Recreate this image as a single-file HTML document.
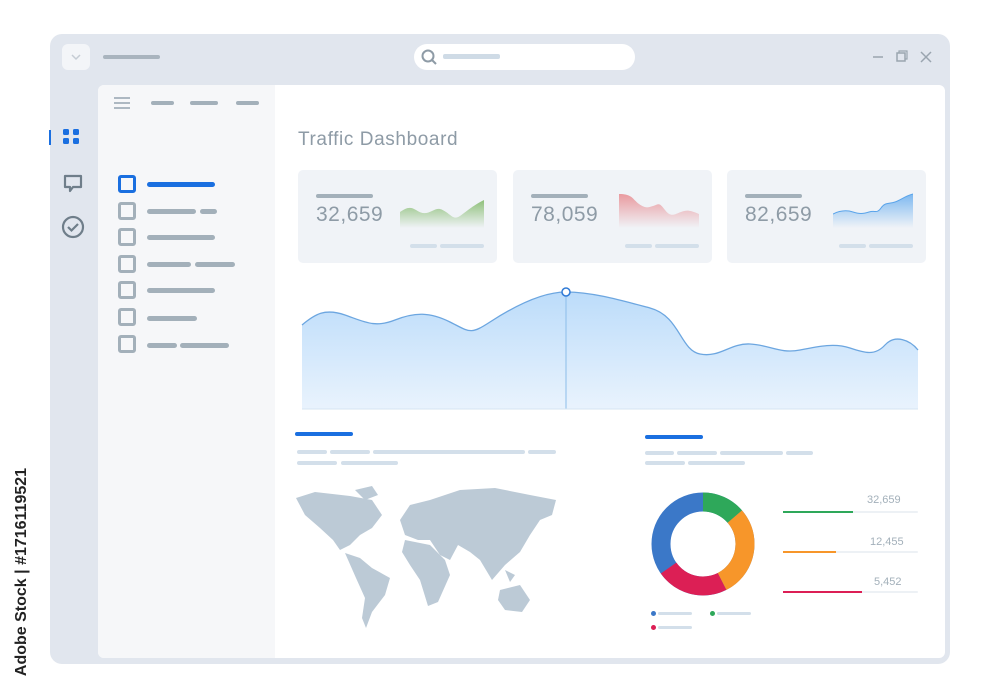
<!DOCTYPE html><html><head><style>
body{margin:0;width:1000px;height:698px;background:#fff;position:relative;overflow:hidden;font-family:"Liberation Sans",sans-serif}
.a{position:absolute}
.bar{position:absolute;height:5px;border-radius:3px;background:#a3b0ba}
.lb{position:absolute;height:4px;border-radius:2px;background:#d3dfea}
.cb{position:absolute;width:12px;height:12px;border:3px solid #a3b0ba;border-radius:3px}
.card{position:absolute;top:170px;width:199px;height:93px;background:#f0f3f7;border-radius:5px}
.num{position:absolute;left:18px;top:33px;font-size:21px;color:#8e9ba6;letter-spacing:.5px}
</style></head><body>
<div class="a" style="left:50px;top:34px;width:900px;height:630px;background:#e1e6ee;border-radius:12px"></div>
<div class="a" style="left:62px;top:44px;width:28px;height:26px;background:#f3f5f8;border-radius:6px"></div>
<svg class="a" style="left:70px;top:52px" width="12" height="10"><path d="M2 3l4 4 4-4" stroke="#c5ccd4" stroke-width="1.5" fill="none"/></svg>
<div class="bar" style="left:103px;top:55px;width:57px;height:4px;background:#a9b4be"></div>
<div class="a" style="left:414px;top:44px;width:221px;height:26px;background:#fff;border-radius:13px"></div>
<svg class="a" style="left:420px;top:48px" width="20" height="20"><circle cx="8" cy="8" r="5.5" stroke="#8e9ba6" stroke-width="2" fill="none"/><path d="M12 12l4 4" stroke="#8e9ba6" stroke-width="2"/></svg>
<div class="lb" style="left:443px;top:54px;width:57px;height:5px;background:#cfdbe6"></div>
<svg class="a" style="left:870px;top:48px" width="65" height="18"><path d="M3 9h10" stroke="#9aa5af" stroke-width="1.5"/><rect x="27" y="5" width="8" height="8" stroke="#9aa5af" fill="none" stroke-width="1.5"/><path d="M29 5V3h8v8h-2" stroke="#9aa5af" fill="none" stroke-width="1.2"/><path d="M51 4l10 10M61 4L51 14" stroke="#9aa5af" stroke-width="1.5"/></svg>
<div class="a" style="left:49px;top:130px;width:2px;height:15px;background:#1a6fe0"></div>
<svg class="a" style="left:62px;top:128px" width="20" height="20"><rect x="1" y="1" width="6" height="6" rx="1.5" fill="#1a6fe0"/><rect x="11" y="1" width="6" height="6" rx="1.5" fill="#1a6fe0"/><rect x="1" y="10" width="6" height="6" rx="1.5" fill="#1a6fe0"/><rect x="11" y="10" width="6" height="6" rx="1.5" fill="#1a6fe0"/></svg>
<svg class="a" style="left:62px;top:172px" width="24" height="24"><path d="M3 4h16v11h-8l-3 4v-4H3z" stroke="#6f7e8a" stroke-width="2.2" fill="none" stroke-linejoin="round"/></svg>
<svg class="a" style="left:61px;top:215px" width="24" height="24"><circle cx="12" cy="12" r="10" stroke="#6f7e8a" stroke-width="2.2" fill="none"/><path d="M7 12l3.5 3.5L17 9" stroke="#6f7e8a" stroke-width="2.2" fill="none"/></svg>
<div class="a" style="left:98px;top:85px;width:847px;height:573px;background:#fff;border-radius:6px"></div>
<div class="a" style="left:98px;top:85px;width:177px;height:573px;background:#f6f7f9;border-radius:6px 0 0 6px"></div>
<svg class="a" style="left:113px;top:96px" width="18" height="16"><path d="M1 2h16M1 7h16M1 12h16" stroke="#a3b0ba" stroke-width="1.8"/></svg>
<div class="bar" style="left:151px;top:101px;width:23px;height:4px"></div>
<div class="bar" style="left:190px;top:101px;width:28px;height:4px"></div>
<div class="bar" style="left:236px;top:101px;width:23px;height:4px"></div>
<div class="cb" style="left:118px;top:175px;border-color:#1a6fe0"></div>
<div class="bar" style="left:147px;top:182px;width:68px;background:#1a6fe0"></div>
<div class="cb" style="left:118px;top:202px"></div><div class="bar" style="left:147px;top:209px;width:49px"></div><div class="bar" style="left:200px;top:209px;width:17px"></div>
<div class="cb" style="left:118px;top:228px"></div><div class="bar" style="left:147px;top:235px;width:68px"></div>
<div class="cb" style="left:118px;top:255px"></div><div class="bar" style="left:147px;top:262px;width:44px"></div><div class="bar" style="left:195px;top:262px;width:40px"></div>
<div class="cb" style="left:118px;top:281px"></div><div class="bar" style="left:147px;top:288px;width:68px"></div>
<div class="cb" style="left:118px;top:308px"></div><div class="bar" style="left:147px;top:316px;width:50px"></div>
<div class="cb" style="left:118px;top:335px"></div><div class="bar" style="left:147px;top:343px;width:30px"></div><div class="bar" style="left:180px;top:343px;width:49px"></div>
<div class="a" style="left:298px;top:129px;font-size:19px;color:#8e9ba6;letter-spacing:.6px">Traffic Dashboard</div>
<div class="card" style="left:298px"><div class="bar" style="left:18px;top:24px;width:57px;height:4px"></div><div class="num">32,659</div>
<svg class="a" style="left:102px;top:28px" width="84" height="30"><defs><linearGradient id="g1" x1="0" y1="0" x2="0" y2="1"><stop offset="0" stop-color="#8fc07a"/><stop offset="1" stop-color="#f0f3f7"/></linearGradient></defs><path d="M0 14C6 10 10 8 16 12S26 16 32 13S40 10 46 14S54 22 60 18S72 8 84 2V30H0z" fill="url(#g1)"/></svg>
<div class="lb" style="left:112px;top:74px;width:27px"></div><div class="lb" style="left:142px;top:74px;width:44px"></div></div>
<div class="card" style="left:513px"><div class="bar" style="left:18px;top:24px;width:57px;height:4px"></div><div class="num">78,059</div>
<svg class="a" style="left:106px;top:22px" width="80" height="36"><defs><linearGradient id="g2" x1="0" y1="0" x2="0" y2="1"><stop offset="0" stop-color="#e99a9f"/><stop offset="1" stop-color="#f0f3f7"/></linearGradient></defs><path d="M0 2C14 2 14 8 20 12S28 16 34 14S40 10 46 18S56 22 62 20S70 18 80 22V36H0z" fill="url(#g2)"/></svg>
<div class="lb" style="left:112px;top:74px;width:27px"></div><div class="lb" style="left:142px;top:74px;width:44px"></div></div>
<div class="card" style="left:727px"><div class="bar" style="left:18px;top:24px;width:57px;height:4px"></div><div class="num">82,659</div>
<svg class="a" style="left:106px;top:22px" width="80" height="36"><defs><linearGradient id="g3" x1="0" y1="0" x2="0" y2="1"><stop offset="0" stop-color="#7db8f0"/><stop offset="1" stop-color="#f0f3f7"/></linearGradient></defs><path d="M0 22C8 18 14 18 20 20S30 22 36 20S44 22 48 16S56 12 62 10S72 4 80 2V36H0z" fill="url(#g3)"/><path d="M0 22C8 18 14 18 20 20S30 22 36 20S44 22 48 16S56 12 62 10S72 4 80 2" stroke="#5aa4ea" fill="none"/></svg>
<div class="lb" style="left:112px;top:74px;width:27px"></div><div class="lb" style="left:142px;top:74px;width:44px"></div></div>
<svg class="a" style="left:0;top:0" width="1000" height="698"><defs><linearGradient id="ga" x1="0" y1="0" x2="0" y2="1"><stop offset="0" stop-color="#bcdcfa"/><stop offset="1" stop-color="#e9f3fd"/></linearGradient></defs>
<path d="M302 325C315 314 325 308 345 315S375 328 395 320S430 312 450 322S470 335 490 322S540 292 566 292S620 300 650 308S680 350 700 354S730 343 750 344S780 354 800 350S835 343 850 348S875 356 885 345S910 340 918 350V409H302z" fill="url(#ga)"/>
<path d="M302 325C315 314 325 308 345 315S375 328 395 320S430 312 450 322S470 335 490 322S540 292 566 292S620 300 650 308S680 350 700 354S730 343 750 344S780 354 800 350S835 343 850 348S875 356 885 345S910 340 918 350" stroke="#6ca6e0" stroke-width="1.3" fill="none"/>
<path d="M566 292V409" stroke="#8cbde9" stroke-width="1"/><path d="M302 409H918" stroke="#d6e4f2"/>
<circle cx="566" cy="292" r="4" fill="#fff" stroke="#2f7ad6" stroke-width="1.5"/>
<g transform="rotate(-90 703 544)" fill="none" stroke-width="19">
<circle cx="703" cy="544" r="42" stroke="#3b78c8"/>
<circle cx="703" cy="544" r="42" stroke="#2ea85a" stroke-dasharray="36 300"/>
<circle cx="703" cy="544" r="42" stroke="#f7962a" stroke-dasharray="0 36 76 300"/>
<circle cx="703" cy="544" r="42" stroke="#dc1f55" stroke-dasharray="0 112 60 300"/>
</g>
<g fill="#bccad6">
<path d="M296 498L315 492L350 496L372 500L382 515L372 528L360 535L350 545L340 550L333 540L320 528L305 515Z"/>
<path d="M355 490L372 486L378 495L365 500Z"/>
<path d="M345 553L360 558L372 568L390 578L385 595L372 612L366 628L362 618L365 598L356 578Z"/>
<path d="M400 520L410 505L430 500L460 490L495 488L530 495L556 500L552 515L540 520L530 535L520 552L505 565L492 580L480 560L470 552L458 545L450 560L440 555L430 540L418 540L405 535Z"/>
<path d="M405 540L430 545L445 560L450 575L438 602L428 606L420 580L410 565L402 552Z"/>
<path d="M500 590L520 585L530 600L522 612L505 610L498 600Z"/>
<path d="M505 570L515 575L510 582Z"/>
</g></svg>
<div class="bar" style="left:295px;top:432px;width:58px;height:4px;background:#1a6fe0"></div>
<div class="lb" style="left:297px;top:450px;width:30px"></div><div class="lb" style="left:330px;top:450px;width:40px"></div><div class="lb" style="left:373px;top:450px;width:152px"></div><div class="lb" style="left:528px;top:450px;width:28px"></div>
<div class="lb" style="left:297px;top:461px;width:40px"></div><div class="lb" style="left:341px;top:461px;width:57px"></div>
<div class="bar" style="left:645px;top:435px;width:58px;height:4px;background:#1a6fe0"></div>
<div class="lb" style="left:645px;top:451px;width:29px"></div><div class="lb" style="left:677px;top:451px;width:40px"></div><div class="lb" style="left:720px;top:451px;width:63px"></div><div class="lb" style="left:786px;top:451px;width:27px"></div>
<div class="lb" style="left:645px;top:461px;width:40px"></div><div class="lb" style="left:688px;top:461px;width:57px"></div>
<div class="a" style="left:867px;top:494px;font-size:11px;color:#a3b0ba">32,659</div>
<div class="lb" style="left:783px;top:511px;width:135px;height:2px;background:#edf1f5"></div><div class="a" style="left:783px;top:511px;width:70px;height:2px;background:#2ea85a"></div>
<div class="a" style="left:870px;top:536px;font-size:11px;color:#a3b0ba">12,455</div>
<div class="lb" style="left:783px;top:551px;width:135px;height:2px;background:#edf1f5"></div><div class="a" style="left:783px;top:551px;width:53px;height:2px;background:#f7962a"></div>
<div class="a" style="left:874px;top:576px;font-size:11px;color:#a3b0ba">5,452</div>
<div class="lb" style="left:783px;top:591px;width:135px;height:2px;background:#edf1f5"></div><div class="a" style="left:783px;top:591px;width:79px;height:2px;background:#dc1f55"></div>
<div class="a" style="left:651px;top:611px;width:5px;height:5px;border-radius:50%;background:#3b78c8"></div><div class="lb" style="left:658px;top:612px;width:34px;height:3px"></div>
<div class="a" style="left:710px;top:611px;width:5px;height:5px;border-radius:50%;background:#2ea85a"></div><div class="lb" style="left:717px;top:612px;width:34px;height:3px"></div>
<div class="a" style="left:651px;top:625px;width:5px;height:5px;border-radius:50%;background:#dc1f55"></div><div class="lb" style="left:658px;top:626px;width:34px;height:3px"></div>
<div class="a" style="left:-100px;top:563px;width:244px;transform:rotate(-90deg);font-size:16px;font-weight:bold;color:#222;white-space:nowrap;text-align:center">Adobe Stock | #1716119521</div>
</body></html>
